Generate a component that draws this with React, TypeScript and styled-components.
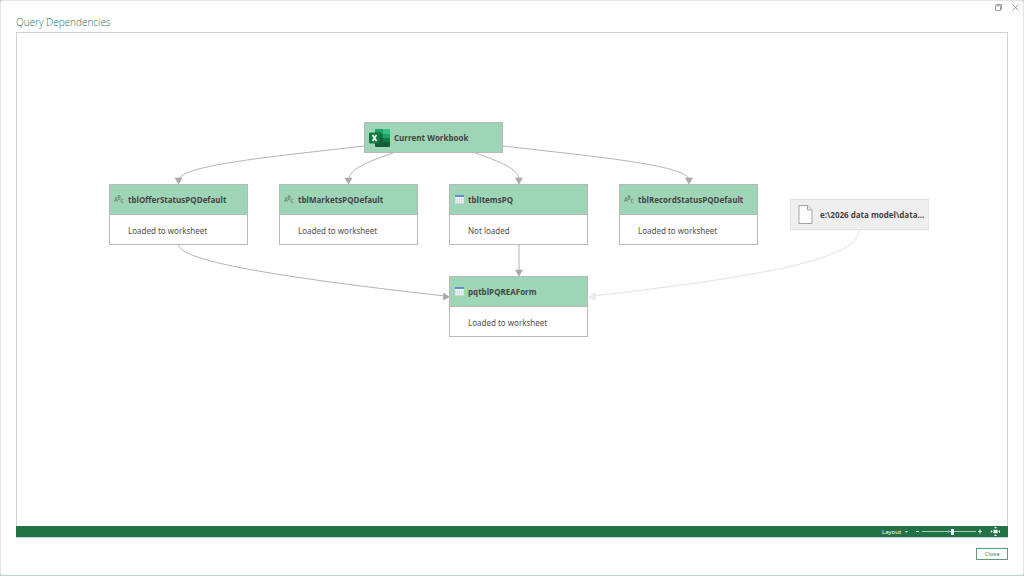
import React, { useState } from "react";
import styled, { createGlobalStyle } from "styled-components";

const GlobalStyle = createGlobalStyle`
  * { box-sizing: border-box; }
  body {
    margin: 0;
    background: #c3d3cb;
    font-family: "Noto Sans", "Open Sans", sans-serif;
    color: #444444;
  }
  button { font-family: inherit; }
`;

const Dialog = styled.main`
  display: flex;
  flex-direction: column;
  min-height: 100vh;
  padding: 0 15px;
  background: #ffffff;
  border: 1px solid #e2e5e4;
  border-bottom-color: #c3d3cb;
  border-radius: 4px;
`;

const CaptionBar = styled.div`
  display: flex;
  justify-content: flex-end;
  gap: 8px;
  height: 12px;
  margin-right: -12px;
`;

const CaptionButton = styled.button`
  display: flex;
  align-items: center;
  justify-content: center;
  width: 9px;
  height: 12px;
  padding: 0;
  border: 0;
  background: none;
`;

const Title = styled.h1`
  margin: 0;
  height: 19px;
  font-family: "Open Sans", "Noto Sans", sans-serif;
  font-size: 10px;
  line-height: 18px;
  font-weight: 300;
  color: #217346;
`;

const Viewer = styled.section`
  display: flex;
  flex: 1;
  flex-direction: column;
  border: 1px solid #d2d2d2;
`;

const Canvas = styled.div`
  display: flex;
  flex: 1;
  justify-content: center;
  overflow: hidden;
`;

const Scene = styled.div`
  position: relative;
  flex: none;
  width: 990px;
  height: 320px;
`;

const Edges = styled.svg`
  position: absolute;
  inset: 0;
  width: 100%;
  height: 100%;
`;

const NodeCard = styled.article<{ $x: number; $y: number; $muted?: boolean }>`
  position: absolute;
  left: ${(p) => p.$x}px;
  top: ${(p) => p.$y}px;
  width: 139px;
  border: 1px solid ${(p) => (p.$muted ? "#e3e3e3" : "#b5b9b7")};
  background: #ffffff;
`;

const NodeHeader = styled.header<{ $large?: boolean; $muted?: boolean }>`
  display: flex;
  align-items: center;
  gap: 4px;
  height: 29px;
  padding-left: 4px;
  background: ${(p) => (p.$muted ? "#efefef" : "#9fd5b7")};
`;

const IconSlot = styled.span<{ $large?: boolean }>`
  display: flex;
  flex: none;
  justify-content: center;
  width: ${(p) => (p.$large ? 21 : 10)}px;
`;

const NodeTitle = styled.h2`
  margin: 0;
  font-family: "Open Sans", "Noto Sans", sans-serif;
  font-size: 8px;
  line-height: 12px;
  font-weight: 700;
  white-space: nowrap;
`;

const NodeStatus = styled.p`
  margin: 0;
  height: 30px;
  padding-left: 18px;
  border-top: 1px solid #b5b9b7;
  color: #505050;
  font-size: 8px;
  line-height: 31px;
`;

const Toolbar = styled.div`
  display: flex;
  align-items: center;
  justify-content: flex-end;
  height: 11px;
  margin: 0 -1px;
  padding-right: 8px;
  background: #217346;
  color: #ffffff;
`;

const ToolButton = styled.button<{ $w: number }>`
  display: flex;
  align-items: center;
  justify-content: space-between;
  width: ${(p) => p.$w}px;
  height: 11px;
  padding: 0;
  border: 0;
  background: none;
  color: inherit;
  font-size: 6px;
  line-height: 10px;
`;

const Slider = styled.input`
  appearance: none;
  width: 54px;
  height: 9px;
  margin: 0 2px;
  background: linear-gradient(#a6c7b5, #a6c7b5) center / 100% 1px no-repeat,
    linear-gradient(#7aab90, #7aab90) 26px center / 1px 3px no-repeat;
  &::-webkit-slider-thumb {
    appearance: none;
    width: 3px;
    height: 6px;
    background: #ffffff;
  }
`;

const Footer = styled.footer`
  display: flex;
  justify-content: flex-end;
  padding: 10px 0 15px;
`;

const CloseButton = styled.button`
  width: 32px;
  height: 12px;
  padding: 0;
  border: 1px solid #5d9a79;
  background: #ffffff;
  color: #4a8a68;
  font-size: 6px;
  line-height: 10px;
`;

function ExcelIcon() {
  return (
    <svg width="21" height="18" viewBox="0 0 21 18" aria-hidden="true">
      <path d="M7 0h7v5H6V1a1 1 0 0 1 1-1z" fill="#21a366" />
      <path d="M14 0h6a1 1 0 0 1 1 1v4h-7z" fill="#33c481" />
      <path d="M6 5h8v4H6z" fill="#107c41" />
      <path d="M14 5h7v4h-7z" fill="#21a366" />
      <path d="M6 9h8v4H6z" fill="#185c37" />
      <path d="M14 9h7v4h-7z" fill="#107c41" />
      <path d="M6 13h15v4a1 1 0 0 1-1 1H7a1 1 0 0 1-1-1z" fill="#185c37" />
      <path d="M6 3h6v12H6z" fill="#0d4c2c" opacity=".45" />
      <rect x="0" y="3.500" width="11" height="11" rx="1" fill="#107c41" />
      <path d="M3.500 6l4 6M7.500 6l-4 6" stroke="#fff" strokeWidth="1.600" />
    </svg>
  );
}

function TextTypeIcon() {
  return (
    <svg width="10" height="9" viewBox="0 0 10 9" fill="none" stroke="#5f7a6c" strokeWidth=".7" aria-hidden="true">
      <path d="M.4 6.800L2 2.400l1.600 4.400M.9 5.400h2.200" />
      <path d="M4.200.5v4M4.200.6h1q1 0 1 .9t-1 .9h-1M5.200 2.400q1.200 0 1.200 1t-1.200 1.100h-1" />
      <path d="M9.600 4.800q-.5-.6-1.100-.6-1.500 0-1.500 1.800t1.500 1.800q.6 0 1.100-.6" />
    </svg>
  );
}

function TableIcon() {
  return (
    <svg width="9" height="9" viewBox="0 0 9 9" aria-hidden="true">
      <path d="M0 0h9v8.500H0z" fill="#fff" />
      <path d="M0 4.200h9M0 6.300h9M2.300 2v6.500M4.500 2v6.500M6.700 2v6.500M.2 2v6.300h8.600V2" stroke="#b4bec8" strokeWidth=".45" fill="none" />
      <path d="M0 0h9v2H0z" fill="#5b93d0" />
    </svg>
  );
}

function FileIcon() {
  return (
    <svg width="15" height="19" viewBox="0 0 15 19" aria-hidden="true">
      <path d="M1 .5h9L14 5v13.500H1z" fill="#fff" stroke="#a3a3a3" />
      <path d="M9.500.5V5H14" fill="#eee" stroke="#a3a3a3" />
    </svg>
  );
}

const icons = { excel: ExcelIcon, text: TextTypeIcon, table: TableIcon, file: FileIcon };

interface QueryNode {
  title: string;
  icon: keyof typeof icons;
  x: number;
  y: number;
  status?: string;
  muted?: boolean;
}

const nodes: QueryNode[] = [
  { title: "Current Workbook", icon: "excel", x: 347, y: 89 },
  { title: "tblOfferStatusPQDefault", icon: "text", x: 92, y: 151, status: "Loaded to worksheet" },
  { title: "tblMarketsPQDefault", icon: "text", x: 262, y: 151, status: "Loaded to worksheet" },
  { title: "tblItemsPQ", icon: "table", x: 432, y: 151, status: "Not loaded" },
  { title: "tblRecordStatusPQDefault", icon: "text", x: 602, y: 151, status: "Loaded to worksheet" },
  { title: "e:\\2026 data model\\data...", icon: "file", x: 773, y: 166, muted: true },
  { title: "pqtblPQREAForm", icon: "table", x: 432, y: 243, status: "Loaded to worksheet" },
];

const edges = [
  { line: "M347 113C262 123 162 132 162 147", head: "M158 145h7l-3.500 6z" },
  { line: "M376 120C350 129 332 136 332 147", head: "M328 145h7l-3.500 6z" },
  { line: "M458 120C484 129 502 136 502 147", head: "M498.500 145h7l-3.500 6z" },
  { line: "M486 113C572 123 672 132 672 147", head: "M668.500 145h7l-3.500 6z" },
  { line: "M162 212C162 226 240 242 428 263", head: "M426.500 260v7l6-3z" },
  { line: "M502 212V238", head: "M498.500 237h7l-3.500 6z" },
  { line: "M842 197C842 224 760 242 576 263", head: "M578 260v7l-6-3z", muted: true },
];

function Node({ node }: { node: QueryNode }) {
  const Icon = icons[node.icon];
  const large = !node.status;
  return (
    <NodeCard $x={node.x} $y={node.y} $muted={node.muted}>
      <NodeHeader $large={large} $muted={node.muted}>
        <IconSlot $large={large}>
          <Icon />
        </IconSlot>
        <NodeTitle>{node.title}</NodeTitle>
      </NodeHeader>
      {node.status && <NodeStatus>{node.status}</NodeStatus>}
    </NodeCard>
  );
}

export default function App() {
  const [zoom, setZoom] = useState(57);
  return (
    <>
      <GlobalStyle />
      <Dialog>
        <CaptionBar>
          <CaptionButton aria-label="Restore">
            <svg width="7" height="7" viewBox="0 0 7 7" fill="none" stroke="#858585" strokeWidth=".8">
              <path d="M.5 1.800h5v4.700h-5zM1.800 1.800V.5h4.700v4.700h-1" />
            </svg>
          </CaptionButton>
          <CaptionButton aria-label="Close window">
            <svg width="7" height="7" viewBox="0 0 7 7" fill="none" stroke="#858585" strokeWidth=".8">
              <path d="M.7.7l5.600 5.600M6.300.7L.7 6.300" />
            </svg>
          </CaptionButton>
        </CaptionBar>
        <Title>Query Dependencies</Title>
        <Viewer>
          <Canvas>
            <Scene>
              <Edges viewBox="0 0 990 320" aria-hidden="true">
                {edges.map((e) => (
                  <g key={e.line}>
                    <path d={e.line} fill="none" stroke={e.muted ? "#e2e2e2" : "#b4b4b4"} />
                    <path
                      d={e.head}
                      fill={e.muted ? "#ececec" : "#a9a9a9"}
                      stroke={e.muted ? "#d8d8d8" : "#a9a9a9"}
                      strokeWidth=".6"
                    />
                  </g>
                ))}
              </Edges>
              {nodes.map((n) => (
                <Node key={n.title} node={n} />
              ))}
            </Scene>
          </Canvas>
          <Toolbar>
            <ToolButton $w={26} aria-haspopup="menu">
              Layout
              <svg width="3" height="2" viewBox="0 0 3 2" aria-hidden="true">
                <path d="M0 0h3L1.500 2z" fill="#fff" />
              </svg>
            </ToolButton>
            <ToolButton $w={12} aria-label="Zoom out">
              <svg width="12" height="5" viewBox="0 0 12 5">
                <path d="M8 2.500h3" stroke="#fff" />
              </svg>
            </ToolButton>
            <Slider
              type="range"
              min={0}
              max={100}
              value={zoom}
              aria-label="Zoom"
              onChange={(e) => setZoom(Number(e.target.value))}
            />
            <ToolButton $w={4} aria-label="Zoom in">
              <svg width="4" height="5" viewBox="0 0 4 5">
                <path d="M0 2.500h4M2 .5v4" stroke="#fff" />
              </svg>
            </ToolButton>
            <ToolButton $w={18} aria-label="Fit to screen">
              <svg width="18" height="9" viewBox="0 0 18 9" fill="#fff">
                <path d="M11.500 2.800h4v3.400h-4zM12 0h3l-1.500 1.800zM12 9h3l-1.500-1.800zM8.800 3v3l2-1.500zM18 3v3l-2-1.500z" />
              </svg>
            </ToolButton>
          </Toolbar>
        </Viewer>
        <Footer>
          <CloseButton>Close</CloseButton>
        </Footer>
      </Dialog>
    </>
  );
}
